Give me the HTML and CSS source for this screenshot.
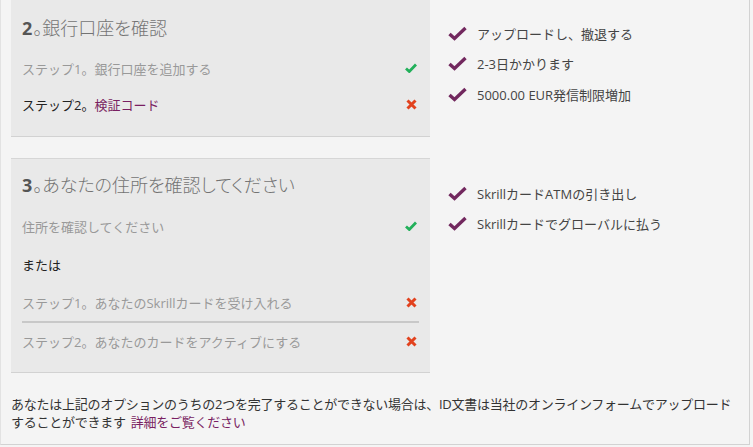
FILE: index.html
```html
<!DOCTYPE html>
<html lang="ja">
<head>
    <meta charset="UTF-8">
    <meta name="viewport" content="width=device-width, initial-scale=1.0">
    <title>アカウント認証</title>
    <link rel="stylesheet" href="styles.css">
</head>
<body>
    <div class="page">
        <div class="verify-grid">
            <div class="panel">
                <h3><strong>2</strong>。銀行口座を確認</h3>
                <div class="step done">
                    <span>ステップ1。銀行口座を追加する</span>
                    <svg class="mark" width="12" height="10" viewBox="0 0 12 10"><path d="M1 5.5 L4.3 8.5 L11 1.5" fill="none" stroke="#22b05a" stroke-width="2.8"/></svg>
                </div>
                <div class="step todo">
                    <span>ステップ2。<a href="#">検証コード</a></span>
                    <svg class="mark" width="11" height="11" viewBox="0 0 11 11"><path d="M1.5 1.5 L9.5 9.5 M9.5 1.5 L1.5 9.5" stroke="#e2421e" stroke-width="3"/></svg>
                </div>
            </div>
            <ul class="benefits">
                <li><svg class="tick" width="19" height="15" viewBox="0 0 19 15"><path d="M1.5 8 L6.5 12.5 L17.5 2" fill="none" stroke="#72285e" stroke-width="3.4"/></svg>アップロードし、撤退する</li>
                <li><svg class="tick" width="19" height="15" viewBox="0 0 19 15"><path d="M1.5 8 L6.5 12.5 L17.5 2" fill="none" stroke="#72285e" stroke-width="3.4"/></svg>2-3日かかります</li>
                <li><svg class="tick" width="19" height="15" viewBox="0 0 19 15"><path d="M1.5 8 L6.5 12.5 L17.5 2" fill="none" stroke="#72285e" stroke-width="3.4"/></svg>5000.00 EUR発信制限増加</li>
            </ul>

            <div class="panel tall">
                <h3><strong>3</strong>。あなたの住所を確認してください</h3>
                <div class="step done">
                    <span>住所を確認してください</span>
                    <svg class="mark" width="12" height="10" viewBox="0 0 12 10"><path d="M1 5.5 L4.3 8.5 L11 1.5" fill="none" stroke="#22b05a" stroke-width="2.8"/></svg>
                </div>
                <div class="step or">
                    <span>または</span>
                </div>
                <div class="step done split">
                    <span>ステップ1。あなたのSkrillカードを受け入れる</span>
                    <svg class="mark" width="11" height="11" viewBox="0 0 11 11"><path d="M1.5 1.5 L9.5 9.5 M9.5 1.5 L1.5 9.5" stroke="#e2421e" stroke-width="3"/></svg>
                </div>
                <div class="step done">
                    <span>ステップ2。あなたのカードをアクティブにする</span>
                    <svg class="mark" width="11" height="11" viewBox="0 0 11 11"><path d="M1.5 1.5 L9.5 9.5 M9.5 1.5 L1.5 9.5" stroke="#e2421e" stroke-width="3"/></svg>
                </div>
            </div>
            <ul class="benefits card">
                <li><svg class="tick" width="19" height="15" viewBox="0 0 19 15"><path d="M1.5 8 L6.5 12.5 L17.5 2" fill="none" stroke="#72285e" stroke-width="3.4"/></svg>SkrillカードATMの引き出し</li>
                <li><svg class="tick" width="19" height="15" viewBox="0 0 19 15"><path d="M1.5 8 L6.5 12.5 L17.5 2" fill="none" stroke="#72285e" stroke-width="3.4"/></svg>Skrillカードでグローバルに払う</li>
            </ul>
        </div>

        <p class="note">あなたは上記のオプションのうちの2つを完了することができない場合は、ID文書は当社のオンラインフォームでアップロードすることができます<a href="#">詳細をご覧ください</a></p>
    </div>
</body>
</html>
```

FILE: styles.css
```css
body {
    margin: 0;
    background: #f4f4f4;
    font-family: 'Open Sans', 'Noto Sans CJK JP', sans-serif;
    font-size: 13px;
    color: #333;
}
.page {
    width: 750px;
    height: 445px;
    border-left: 1px solid #e2e2e2;
    border-right: 1px solid #d2d2d2;
    border-bottom: 1px solid #d2d2d2;
    box-sizing: border-box;
    padding: 0 0 0 10px;
}
.verify-grid {
    display: grid;
    grid-template-columns: 419px 1fr;
    row-gap: 21px;
}
.panel {
    background: #e9e9e9;
    border-top: 1px solid #d6d6d6;
    border-bottom: 1px solid #d2d2d2;
    padding: 0 11px 14px 11px;
    margin-top: -1px;
}
.panel.tall {
    margin-top: 0;
    padding-bottom: 13px;
}
h3 {
    margin: 0;
    padding: 17px 0 11px;
    line-height: 22px;
    font-size: 18px;
    font-weight: 300;
    font-feature-settings: "palt";
    color: #737373;
}
h3 strong {
    color: #555;
    font-weight: bold;
    margin-right: 1px;
}
.tall h3 {
    padding: 15px 0 11px;
}
.step {
    display: flex;
    justify-content: space-between;
    align-items: center;
    height: 36px;
    padding-right: 2px;
    color: #999;
}
.tall .step {
    height: 38px;
}
.tall .step:last-child {
    height: 36px;
}
.step.todo,
.step.or {
    color: #222;
}
.step.split {
    border-bottom: 2px solid #c8c8c8;
}
.step a,
.note a {
    color: #7a1f62;
    text-decoration: none;
}
.note a {
    margin-left: 5px;
}
.benefits {
    list-style: none;
    margin: 0;
    padding: 18px 0 0 18px;
}
.benefits.card {
    padding-top: 20px;
}
.benefits li {
    display: flex;
    align-items: center;
    height: 30.5px;
    color: #444;
}
.tick {
    margin-right: 10px;
}
.note {
    width: 728px;
    margin: 22px 0 0;
    line-height: 18px;
    letter-spacing: -0.25px;
    color: #333;
}
```
